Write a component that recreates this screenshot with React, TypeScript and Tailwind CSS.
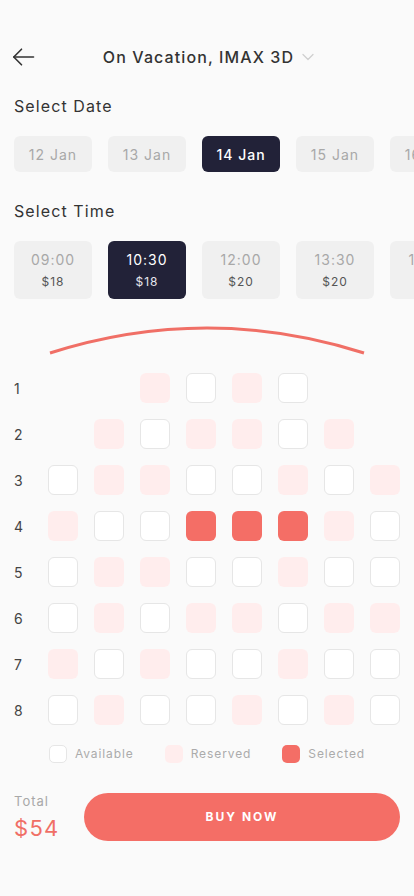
import { useState } from "react";

const dates = ["12 Jan", "13 Jan", "14 Jan", "15 Jan", "16 Jan"];
const times = [
  { time: "09:00", price: "$18" },
  { time: "10:30", price: "$18" },
  { time: "12:00", price: "$20" },
  { time: "13:30", price: "$20" },
  { time: "15:00", price: "$20" },
];

// _ empty, A available, R reserved, S selected
const seatMap = [
  "__RARA__",
  "_RARRAR_",
  "ARRAARAR",
  "RAASSSRA",
  "ARRAARAA",
  "ARARRARR",
  "RARAARAA",
  "ARAARARA",
];

function Seat({ kind }: { kind: string }) {
  if (kind === "_") return <div className="w-[30px] h-[30px]" />;
  if (kind === "R") return <div className="w-[30px] h-[30px] rounded-[6px] bg-[#ffeded]" />;
  if (kind === "S") return <div className="w-[30px] h-[30px] rounded-[6px] bg-[#f46e66]" />;
  return <div className="w-[30px] h-[30px] rounded-[6px] bg-white border border-[#e6e6e6]" />;
}

export default function App() {
  const [date, setDate] = useState(2);
  const [time, setTime] = useState(1);

  return (
    <div
      className="w-[414px] min-h-[896px] bg-[#fafafa] overflow-hidden"
      style={{ fontFamily: "Inter, 'Noto Sans', sans-serif" }}
    >
      <header className="grid grid-cols-[40px_1fr_40px] items-center h-[28px] mt-[43px] pl-[12px] pr-[14px]">
        <button className="text-[#333]">
          <svg width="23" height="20" viewBox="0 0 23 20" fill="none" stroke="currentColor" strokeWidth="1.6" strokeLinecap="round" strokeLinejoin="round">
            <path d="M21.5 10H1.8" />
            <path d="M9.5 2.2L1.8 10l7.7 7.8" />
          </svg>
        </button>
        <div className="flex items-center justify-center gap-[8px] pl-[5px]">
          <h1 className="text-[16px] font-medium tracking-[1.1px] text-[#333]">On Vacation, IMAX 3D</h1>
          <svg width="12" height="8" viewBox="0 0 12 8" fill="none" stroke="#cfcfcf" strokeWidth="1.3" strokeLinecap="round" strokeLinejoin="round">
            <path d="M1 1.5l5 5 5-5" />
          </svg>
        </div>
        <div />
      </header>

      <h2 className="mt-[23px] px-[14px] h-[24px] leading-[24px] text-[16px] tracking-[1.1px] text-[#333]">Select Date</h2>
      <div className="mt-[18px] flex gap-4 px-[14px] overflow-hidden">
        {dates.map((d, i) => (
          <button
            key={d}
            onClick={() => setDate(i)}
            className={
              i === date
                ? "shrink-0 w-[78px] h-[36px] rounded-[6px] bg-[#222238] text-white text-[14px] font-medium tracking-[1px]"
                : "shrink-0 w-[78px] h-[36px] rounded-[6px] bg-[#f0f0f0] text-[#a8a8a8] text-[14px] tracking-[1px]"
            }
          >
            {d}
          </button>
        ))}
      </div>

      <h2 className="mt-[27px] px-[14px] h-[24px] leading-[24px] text-[16px] tracking-[1.1px] text-[#333]">Select Time</h2>
      <div className="mt-[18px] flex gap-4 px-[14px] overflow-hidden">
        {times.map((t, i) => (
          <button
            key={t.time}
            onClick={() => setTime(i)}
            className={
              i === time
                ? "shrink-0 w-[78px] h-[58px] rounded-[6px] bg-[#222238] flex flex-col items-center justify-center gap-[3px]"
                : "shrink-0 w-[78px] h-[58px] rounded-[6px] bg-[#f0f0f0] flex flex-col items-center justify-center gap-[3px]"
            }
          >
            <span className={i === time ? "text-[14px] tracking-[1px] text-white" : "text-[14px] tracking-[1px] text-[#a8a8a8]"}>{t.time}</span>
            <span className={i === time ? "text-[12px] tracking-[1px] text-[#e6e6ee]" : "text-[12px] tracking-[1px] text-[#555]"}>{t.price}</span>
          </button>
        ))}
      </div>

      <svg className="mt-[27px] block overflow-visible" width="414" height="30" viewBox="0 0 414 30" fill="none">
        <path d="M50 27 Q207 -23 364 27" stroke="#f06f66" strokeWidth="3" />
      </svg>

      <div className="mt-[17px] flex flex-col gap-4 pl-[14px]">
        {seatMap.map((row, r) => (
          <div key={r} className="flex items-center h-[30px]">
            <span className="w-[34px] text-[14px] text-[#444]">{r + 1}</span>
            <div className="flex gap-4">
              {row.split("").map((k, c) => (
                <Seat key={c} kind={k} />
              ))}
            </div>
          </div>
        ))}
      </div>

      <div className="mt-[20px] flex justify-center items-center gap-[31px] text-[12px] tracking-[0.9px] text-[#ababab]">
        <div className="flex items-center gap-2">
          <div className="w-[18px] h-[18px] rounded-[5px] bg-white border border-[#e6e6e6]" />
          <span>Available</span>
        </div>
        <div className="flex items-center gap-2">
          <div className="w-[18px] h-[18px] rounded-[5px] bg-[#ffeded]" />
          <span>Reserved</span>
        </div>
        <div className="flex items-center gap-2">
          <div className="w-[18px] h-[18px] rounded-[5px] bg-[#f46e66]" />
          <span>Selected</span>
        </div>
      </div>

      <div className="mt-[30px] flex items-center px-[14px]">
        <div className="w-[70px] flex flex-col">
          <span className="text-[13px] tracking-[1px] text-[#a8a8a8] leading-[16px]">Total</span>
          <span className="mt-[6px] text-[22px] tracking-[1.3px] text-[#f06f66] leading-[26px]">$54</span>
        </div>
        <button className="flex-1 h-[48px] rounded-full bg-[#f46e66] text-white text-[12px] font-bold tracking-[2px]">
          BUY NOW
        </button>
      </div>
    </div>
  );
}
